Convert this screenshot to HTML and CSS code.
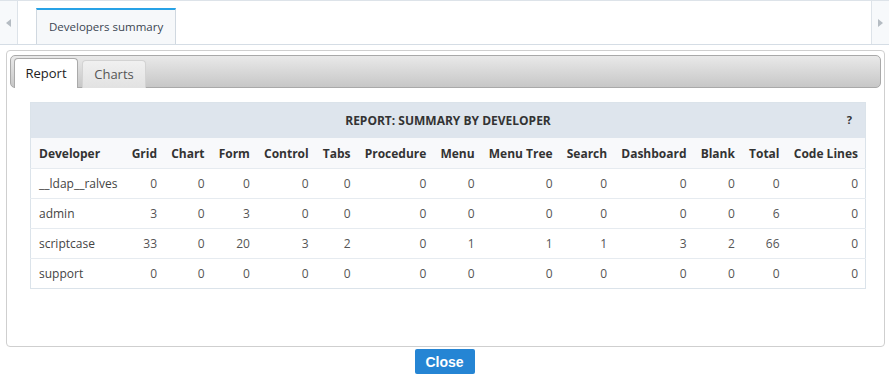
FILE: index.html
```html
<!DOCTYPE html>
<html lang="en">
<head>
    <meta charset="UTF-8">
    <title>Developers summary</title>
    <link rel="stylesheet" href="styles.css">
</head>
<body>
    <!-- Application tab strip -->
    <div class="tabstrip">
        <div class="scroll-btn left"><span class="arrow-left"></span></div>
        <div class="app-tabs">
            <div class="app-tab">Developers summary</div>
        </div>
        <div class="scroll-btn right"><span class="arrow-right"></span></div>
    </div>

    <!-- Main panel -->
    <div class="panel">
        <div class="panel-tabs">
            <div class="panel-tab active">Report</div>
            <div class="panel-tab">Charts</div>
        </div>

        <div class="report">
            <table class="summary">
                <tr class="title-row">
                    <td colspan="14">
                        <span class="title">REPORT: SUMMARY BY DEVELOPER</span>
                        <span class="help">?</span>
                    </td>
                </tr>
                <tr class="head-row">
                    <th class="name">Developer</th>
                    <th>Grid</th>
                    <th>Chart</th>
                    <th>Form</th>
                    <th>Control</th>
                    <th>Tabs</th>
                    <th>Procedure</th>
                    <th>Menu</th>
                    <th>Menu Tree</th>
                    <th>Search</th>
                    <th>Dashboard</th>
                    <th>Blank</th>
                    <th>Total</th>
                    <th>Code Lines</th>
                </tr>
                <tr>
                    <td class="name">__ldap__ralves</td>
                    <td>0</td><td>0</td><td>0</td><td>0</td><td>0</td><td>0</td><td>0</td><td>0</td><td>0</td><td>0</td><td>0</td><td>0</td><td>0</td>
                </tr>
                <tr>
                    <td class="name">admin</td>
                    <td>3</td><td>0</td><td>3</td><td>0</td><td>0</td><td>0</td><td>0</td><td>0</td><td>0</td><td>0</td><td>0</td><td>6</td><td>0</td>
                </tr>
                <tr>
                    <td class="name">scriptcase</td>
                    <td>33</td><td>0</td><td>20</td><td>3</td><td>2</td><td>0</td><td>1</td><td>1</td><td>1</td><td>3</td><td>2</td><td>66</td><td>0</td>
                </tr>
                <tr>
                    <td class="name">support</td>
                    <td>0</td><td>0</td><td>0</td><td>0</td><td>0</td><td>0</td><td>0</td><td>0</td><td>0</td><td>0</td><td>0</td><td>0</td><td>0</td>
                </tr>
            </table>
        </div>
    </div>

    <!-- Footer button -->
    <div class="footer">
        <button class="btn-close">Close</button>
    </div>
</body>
</html>
```

FILE: styles.css
```css
/* Page font and reset */
body {
    margin: 0;
    font-family: "Open Sans", "Liberation Sans", sans-serif;
    font-size: 12px;
    color: #333;
    background: #fff;
}
/* Top strip with the application tabs */
.tabstrip {
    display: flex;
    height: 43px;
    border-top: 1px solid #dde3e9;
    border-bottom: 1px solid #d5dde5;
}
.scroll-btn {
    width: 17px;
    background: #f7f9fb;
    display: flex;
    align-items: center;
    justify-content: center;
}
.scroll-btn.left {
    border-right: 1px solid #dde3e9;
}
.scroll-btn.right {
    border-left: 1px solid #dde3e9;
}
.arrow-left {
    width: 0;
    height: 0;
    border-top: 4px solid transparent;
    border-bottom: 4px solid transparent;
    border-right: 5px solid #b5bcc3;
}
.arrow-right {
    width: 0;
    height: 0;
    border-top: 4px solid transparent;
    border-bottom: 4px solid transparent;
    border-left: 5px solid #b5bcc3;
}
.app-tabs {
    flex: 1;
    display: flex;
    align-items: flex-end;
    padding-left: 18px;
}
.app-tab {
    height: 34px;
    line-height: 34px;
    padding: 0 12px;
    font-size: 11.5px;
    background: #f6f8fa;
    border-top: 2px solid #27a2e6;
    border-left: 1px solid #d0d8e0;
    border-right: 1px solid #d0d8e0;
    color: #3b4652;
}
/* Main panel with the inner tabs */
.panel {
    margin: 5px 4px 0 6px;
    height: 287px;
    padding: 4px 3px;
    border: 1px solid #cfcfcf;
    border-radius: 4px;
}
.panel-tabs {
    display: flex;
    align-items: flex-end;
    gap: 4px;
    height: 31px;
    padding-left: 3px;
    border: 1px solid #a9a9a9;
    border-radius: 5px;
    background: linear-gradient(#e9e9e9, #c7c7c7);
}
.panel-tab {
    width: 62px;
    height: 27px;
    line-height: 27px;
    text-align: center;
    font-size: 13px;
    color: #555;
    background: linear-gradient(#f0f0f0, #e2e2e2);
    border: 1px solid #d3d3d3;
    border-bottom: none;
    border-radius: 4px 4px 0 0;
    margin-bottom: -1px;
}
.panel-tab.active {
    height: 29px;
    line-height: 29px;
    background: #fff;
    color: #222;
    border-color: #aaa;
}
/* Report table */
.report {
    padding: 14px 15px 0 20px;
}
.summary {
    width: 100%;
    border-collapse: collapse;
    border: 1px solid #dbe3ea;
    font-size: 12px;
}
.summary td {
    height: 29px;
    text-align: right;
    padding: 0 7px;
    color: #555;
    border-top: 1px solid #e6ebf0;
}
.summary .title-row td {
    height: 35px;
    padding: 0;
    background: #dee5ed;
    text-align: center;
    font-weight: bold;
    font-size: 12px;
    color: #333;
    border-top: none;
    position: relative;
}
.help {
    position: absolute;
    right: 13px;
    top: 9px;
    font-size: 11px;
}
.head-row th {
    height: 30px;
    background: #f8f9fb;
    font-weight: bold;
    color: #333;
    text-align: right;
    padding: 0 7px;
    white-space: nowrap;
}
.summary .name {
    text-align: left;
    padding-left: 8px;
    color: #444;
}
.head-row th.name {
    color: #333;
}
/* Footer with the close button */
.footer {
    text-align: center;
    padding-top: 2px;
}
.btn-close {
    width: 60px;
    height: 25px;
    border: none;
    border-radius: 2px;
    background: #2585d4;
    color: #fff;
    font-family: "Liberation Sans", Arial, sans-serif;
    font-size: 14px;
    font-weight: bold;
}
```
